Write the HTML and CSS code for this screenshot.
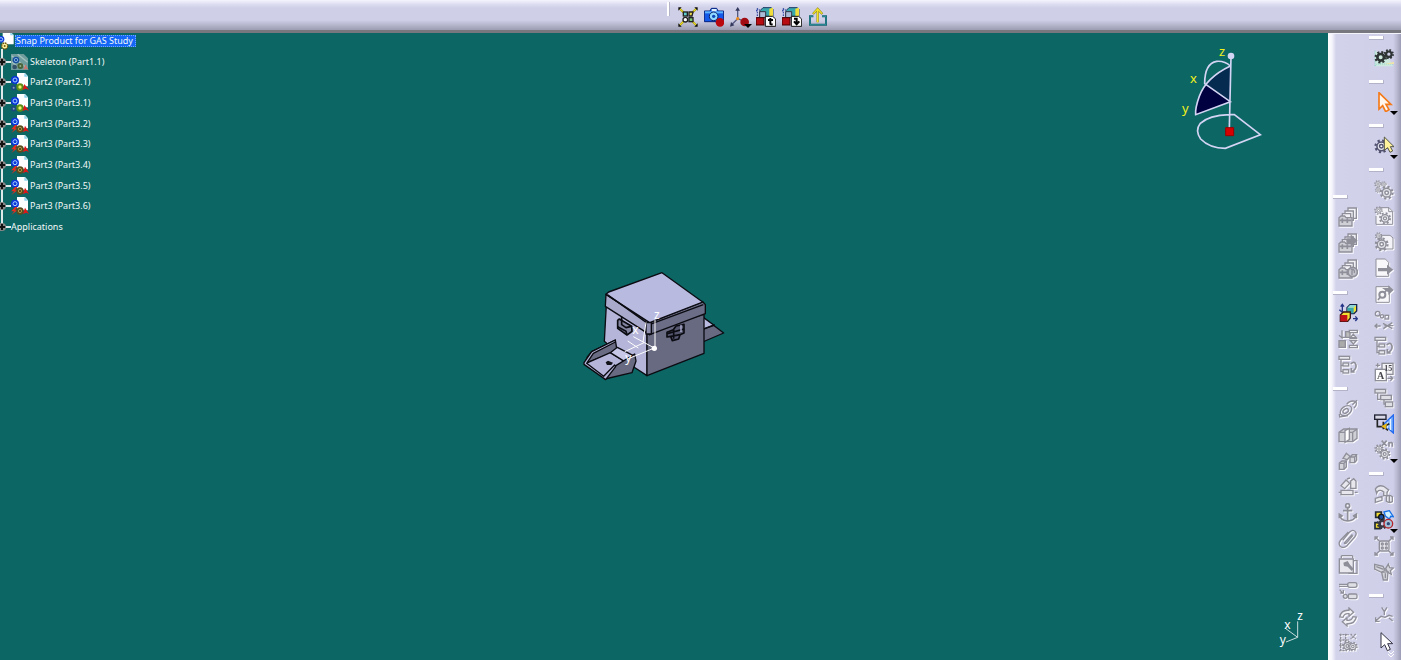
FILE: index.html
```html
<!DOCTYPE html>
<html lang="en">
<head>
<meta charset="utf-8">
<title>Snap Product for GAS Study</title>
<link rel="stylesheet" href="styles.css">
</head>
<body>
<svg class="sprite" aria-hidden="true">
  <symbol id="gear" viewBox="-9.6 -9.6 19.2 19.2"><circle r="7.5" fill="none" stroke="currentColor" stroke-width="4" stroke-dasharray="3 2.9"/><circle r="5" fill="none" stroke="currentColor" stroke-width="4"/></symbol>
  <symbol id="gear-line" viewBox="-10 -10 20 20"><circle r="8" fill="none" stroke="currentColor" stroke-width="3" stroke-dasharray="3 3.3"/><circle r="6" fill="#e4e4ea" stroke="currentColor" stroke-width="2"/><circle r="2.4" fill="#fff" stroke="currentColor" stroke-width="2"/></symbol>
  <symbol id="part" viewBox="0 0 54 54">
    <path d="M18 0H42L51 10V40H18Z" fill="#fff"/><path d="M40 0L51 11H40Z" fill="#8fd4ee"/>
    <circle cx="12" cy="21" r="12" fill="#0a35d8"/><circle cx="12" cy="21" r="6" fill="none" stroke="#a8d4ff" stroke-width="3"/>
    <circle cx="8" cy="44" r="8" fill="#1c4880"/><circle cx="8" cy="44" r="3" fill="#7f9ec0"/>
    <circle cx="27" cy="42" r="11" fill="#5d8c16"/><circle cx="27" cy="42" r="5" fill="#eef06a"/>
    <path d="M35 51L40 33L54 51L45 47Z" fill="#e01818"/>
  </symbol>
  <symbol id="part-red" viewBox="0 0 54 54">
    <path d="M18 0H42L51 10V40H18Z" fill="#fff"/><path d="M40 0L51 11H40Z" fill="#8fd4ee"/>
    <circle cx="12" cy="20" r="12" fill="#0a35d8"/><circle cx="12" cy="20" r="6" fill="none" stroke="#a8d4ff" stroke-width="3"/>
    <path d="M12 30L1 43H10L1 54L19 40H12L19 31Z" fill="#f02a1a"/>
    <circle cx="27" cy="42" r="11" fill="#5b4a1c"/><circle cx="27" cy="42" r="5" fill="none" stroke="#a8924a" stroke-width="3"/>
    <path d="M36 51L42 32L54 51L46 47Z" fill="#e01818"/>
  </symbol>
  <symbol id="skeleton" viewBox="0 0 54 54">
    <path d="M0 3H38L51 16V51H0Z" fill="#6f9c9c"/><path d="M2 8L46 44M2 26L26 46M20 4L50 28" stroke="#a5c1c1" stroke-width="4"/>
    <circle cx="15" cy="21" r="10" fill="#174e9d"/><circle cx="15" cy="21" r="5" fill="none" stroke="#79a9d8" stroke-width="3"/>
    <circle cx="11" cy="42" r="7" fill="#34516b"/><circle cx="28" cy="39" r="9" fill="#49653b"/><circle cx="28" cy="39" r="3" fill="#9ab08b"/>
    <path d="M37 51L43 34L53 51L46 47Z" fill="#c87870"/>
  </symbol>
  <symbol id="product" viewBox="0 0 42 54">
    <path d="M8 0H32L41 9V37H8Z" fill="#fff"/><path d="M31 0L41 10H31Z" fill="#8fd4ee"/>
    <circle cx="3" cy="22" r="10" fill="#0a35d8"/><circle cx="3" cy="22" r="5" fill="none" stroke="#a8d4ff" stroke-width="3"/>
    <circle cx="14" cy="42" r="9" fill="#fff2a0" stroke="#6f5a10" stroke-width="4" stroke-dasharray="5 2"/><circle cx="14" cy="42" r="3" fill="#6f5a10"/>
  </symbol>

  <symbol id="fit" viewBox="0 0 60 60">
    <path d="M5 5L22 21M55 5L38 21M5 55L22 38M55 55L38 38" stroke="#8a8018" stroke-width="6"/>
    <path d="M5 5L22 21M55 5L38 21M5 55L22 38M55 55L38 38" stroke="#e8d820" stroke-width="4"/>
    <path d="M1 1H11L1 11ZM59 1H49L59 11ZM1 59V49L11 59ZM59 59V49L49 59Z" fill="#111"/>
    <g fill="#fff" stroke="#222" stroke-width="4"><rect x="16" y="15" width="12" height="12" fill="#5fd0d0"/><path d="M33 15H45L42 27H33Z" fill="#eadb4d"/><circle cx="22" cy="38" r="7"/><rect x="33" y="32" width="12" height="12" fill="#7bc878"/></g>
  </symbol>
  <symbol id="camera" viewBox="0 0 60 60">
    <path d="M1 12H18L22 4H38L42 12H59V44H1Z" fill="#1358e8" stroke="#06217d" stroke-width="3"/><path d="M3 16H57" stroke="#5db6ff" stroke-width="6"/><rect x="23" y="6" width="15" height="7" fill="#dff0ff"/>
    <circle cx="29" cy="28" r="13" fill="#8fd8ff" stroke="#08226d" stroke-width="3"/><circle cx="29" cy="28" r="5" fill="#0c48b8"/><circle cx="48" cy="46" r="13" fill="#b9080e"/>
  </symbol>
  <symbol id="axes" viewBox="0 0 60 60">
    <path d="M23 4V35L4 54M23 35L40 42" fill="none" stroke="#555a80" stroke-width="4"/><path d="M23 0L30 11H16ZM0 59L3 45L13 55Z" fill="#33395e"/><circle cx="23" cy="35" r="5" fill="#e98d20"/><circle cx="44" cy="45" r="13" fill="#a20b12"/>
  </symbol>
  <symbol id="boxes" viewBox="0 0 60 60">
    <path d="M4 6V35M0 14L4 4L12 10M4 35L15 25" stroke="#233a9a" stroke-width="3" fill="none" stroke-dasharray="5 3"/>
    <path d="M12 11L21 2H46L51 7V28H12Z" fill="#38a8ad" stroke="#193b66" stroke-width="3"/><path d="M40 5L51 2V28H40Z" fill="#f1de3d"/><path d="M11 14H29V32H11Z" fill="#a9bcd8" stroke="#334" stroke-width="3"/><rect x="0" y="32" width="24" height="22" fill="#b60c12" stroke="#400" stroke-width="3"/>
    <path d="M28 28H50L59 36V58H28Z" fill="#fff" stroke="#111" stroke-width="3"/>
  </symbol>
  <symbol id="load" viewBox="0 0 60 60"><use href="#boxes"/><path d="M43 33V50Q43 53 50 52M36 39H51" fill="none" stroke="#000" stroke-width="6"/></symbol>
  <symbol id="unload" viewBox="0 0 60 60"><use href="#boxes"/><path d="M36 35H44V50M36 43L44 52L52 43" fill="none" stroke="#000" stroke-width="6"/></symbol>
  <symbol id="export" viewBox="0 0 60 60">
    <path d="M16 28H6V53H54V28H42" fill="none" stroke="#15616c" stroke-width="6"/><path d="M16 28H6V53H54V28H42" fill="none" stroke="#37a5b0" stroke-width="2"/>
    <path d="M29 8V46M15 21L29 6L43 21" fill="none" stroke="#938a14" stroke-width="7"/><path d="M29 8V46M16 20L29 6L42 20" fill="none" stroke="#f2e32a" stroke-width="4"/>
  </symbol>

  <symbol id="workbench" viewBox="0 0 60 60">
    <path d="M3 8V55H58L44 31Z" fill="#cce8df"/><path d="M3 8V55L8 48H57" fill="none" stroke="#69cdbb" stroke-width="2" stroke-dasharray="3 3"/><path d="M30 49L61 41V48Z" fill="#eee3aa"/>
    <g color="#2e3434"><use href="#gear" x="1" y="9" width="38" height="38"/><use href="#gear" x="29" y="3" width="31" height="31"/></g>
  </symbol>
  <symbol id="arrow" viewBox="0 0 60 60"><path d="M15 2V51L26 41L35 59L45 53L36 37H51Z" fill="#fff6ed" stroke="#f47a19" stroke-width="5"/></symbol>
  <symbol id="select" viewBox="0 0 60 60"><g color="#515170"><use href="#gear-line" x="0" y="9" width="44" height="44"/></g><path d="M31 3V43L41 35L48 49L56 45L49 32H60Z" fill="#fff29a" stroke="#55564a" stroke-width="3"/></symbol>
  <symbol id="cursor" viewBox="0 0 60 60"><path d="M21 2V48L32 38L40 56L49 52L41 35H56Z" fill="#fff" stroke="#333344" stroke-width="3"/></symbol>

  <symbol id="g-gears" viewBox="0 0 60 60"><use href="#gear-line" x="0" y="0" width="24" height="24"/><use href="#gear-line" x="20" y="3" width="19" height="19"/><use href="#gear-line" x="2" y="20" width="20" height="20"/><use href="#gear-line" x="16" y="16" width="44" height="44"/></symbol>
  <symbol id="g-gearpage" viewBox="0 0 60 60"><path d="M18 5H45L56 16V55H6V30" fill="#f4f4f8" stroke="currentColor" stroke-width="3"/><path d="M44 5V17H56" fill="none" stroke="currentColor" stroke-width="3"/><use href="#gear-line" x="0" y="0" width="27" height="27"/><use href="#gear-line" x="14" y="18" width="38" height="38"/></symbol>
  <symbol id="g-gearpage2" viewBox="0 0 60 60"><path d="M22 10H48L57 18V51H22Z" fill="#f4f4f8" stroke="currentColor" stroke-width="3"/><use href="#gear-line" x="2" y="0" width="24" height="24"/><use href="#gear-line" x="1" y="15" width="44" height="44"/></symbol>
  <symbol id="g-pagearrow" viewBox="0 0 60 60"><path d="M6 3H34L44 13V55H6Z" fill="#f8f8fa" stroke="currentColor" stroke-width="3"/><path d="M12 30H39V20L58 35L39 50V40H12Z" fill="currentColor"/></symbol>
  <symbol id="g-replace" viewBox="0 0 60 60"><path d="M6 8H46V55H6Z" fill="#f8f8fa" stroke="currentColor" stroke-width="3"/><path d="M24 12H43V4L59 18L43 33V25" fill="currentColor"/><circle cx="25" cy="32" r="9" fill="none" stroke="currentColor" stroke-width="6"/><path d="M12 48L18 40M32 25L38 18" stroke="currentColor" stroke-width="5"/></symbol>
  <symbol id="g-reorder" viewBox="0 0 60 60"><g fill="none" stroke="currentColor" stroke-width="4"><circle cx="11" cy="11" r="7"/><circle cx="24" cy="19" r="5"/><rect x="33" y="16" width="11" height="11"/><path d="M3 48H20M10 41L3 48L10 55M27 40L55 56M55 38L28 56M31 47H58"/></g></symbol>
  <symbol id="g-tree" viewBox="0 0 60 60"><g fill="#e9e9f0" stroke="currentColor" stroke-width="4"><path d="M9 14V50H18M9 31H18" fill="none"/><rect x="3" y="4" width="32" height="9"/><rect x="15" y="24" width="17" height="9"/><rect x="15" y="44" width="17" height="10"/><path d="M38 27Q50 16 54 30Q56 42 42 50M40 39V51H50" fill="none" stroke-width="5"/></g></symbol>
  <symbol id="g-treegraph" viewBox="0 0 60 60"><g fill="#dedee5" stroke="currentColor" stroke-width="4"><path d="M11 16V34H24M30 30V48H38" fill="none"/><rect x="3" y="4" width="32" height="11"/><rect x="20" y="22" width="32" height="13"/><rect x="34" y="42" width="22" height="14"/></g></symbol>
  <symbol id="manage" viewBox="0 0 60 60"><path d="M58 3L29 31L58 57Z" fill="#7eb6ff" stroke="#246bf0" stroke-width="4"/><path d="M49 15V48M41 25V43" stroke="#fff" stroke-width="3"/><rect x="2" y="3" width="34" height="13" fill="#d8d8e6" stroke="#222333" stroke-width="4"/><path d="M10 17V38H28M28 23V46M28 38L46 29M28 38L42 49" stroke="#252525" fill="none" stroke-width="5"/><path d="M22 37L39 28L36 46Z" fill="#ecba15"/></symbol>
  <symbol id="g-multi" viewBox="0 0 60 60"><use href="#gear-line" x="0" y="12" width="30" height="30"/><use href="#gear-line" x="14" y="24" width="36" height="36"/><path d="M23 2L38 18M38 2L23 18M45 20V6M45 10Q55 4 55 13V20" fill="none" stroke="currentColor" stroke-width="5"/></symbol>
  <symbol id="g-stack" viewBox="0 0 60 60"><g fill="#f2f2f6" stroke="currentColor" stroke-width="4"><path d="M30 3H55V34H30Z"/><path d="M21 12H46V40H21Z"/><path d="M13 20H38V44H13Z"/><path d="M3 32L9 27H20L24 32H42V57H3Z" fill="#cfcfd6"/></g><path d="M5 40H40M13 34V48M28 34V48" stroke="currentColor" stroke-width="5"/></symbol>
  <symbol id="g-stackarrow" viewBox="0 0 60 60"><use href="#g-stack"/><path d="M25 16H38V4L59 23L38 42V30H25Z" fill="currentColor"/></symbol>
  <symbol id="g-stackround" viewBox="0 0 60 60"><use href="#g-stack"/><circle cx="44" cy="39" r="14" fill="#c4c4cc" stroke="currentColor" stroke-width="5"/><path d="M38 31Q52 29 49 42M42 34V48" fill="none" stroke="currentColor" stroke-width="4"/></symbol>
  <symbol id="cubes" viewBox="0 0 60 60"><path d="M13 5V28L4 20M13 28H27M45 47H58M52 40L58 47L52 54M8 11L13 4L18 11" stroke="#243485" fill="none" stroke-width="4"/><path d="M27 14L36 5H56V24L48 32H27Z" fill="#f1df32" stroke="#16254e" stroke-width="4"/><path d="M28 14H47V31H28Z" fill="#38a8ad"/><path d="M28 14L36 6H55L47 14Z" fill="#8fd6d8"/><path d="M7 36L16 27H37V45L29 55H7Z" fill="#f1df32" stroke="#3c1515" stroke-width="4"/><path d="M7 36H28V55H7Z" fill="#bf1319"/></symbol>
  <symbol id="g-cubes" viewBox="0 0 60 60"><g fill="#f2f2f6" stroke="currentColor" stroke-width="4"><path d="M12 4V27L3 19M12 25H30V9M2 48H22" fill="none"/><path d="M23 8H36V25H23Z" fill="#bbb"/><path d="M3 35H22V55H3Z" fill="#aaa"/><path d="M34 4H58V11H34ZM37 26L46 16L55 26ZM34 29H58M37 35H55L46 45ZM34 49H58V56H34Z"/></g></symbol>
  <symbol id="g-coincide" viewBox="0 0 60 60"><g fill="none" stroke="currentColor" stroke-width="4"><ellipse cx="24" cy="35" rx="19" ry="13" transform="rotate(-35 24 35)"/><ellipse cx="23" cy="36" rx="9" ry="6" transform="rotate(-35 23 36)"/><path d="M26 16Q35 3 53 7Q59 17 48 27M43 17L57 4M4 45L5 54L30 50"/></g></symbol>
  <symbol id="g-contact" viewBox="0 0 60 60"><g fill="#cfcfd6" stroke="currentColor" stroke-width="4"><path d="M3 22L17 12H57V40L44 50H3Z"/><path d="M3 22H44V50M44 22L57 12" fill="none"/><path d="M21 17L34 10V44L21 52Z" fill="#fff"/></g></symbol>
  <symbol id="g-offset" viewBox="0 0 60 60"><g fill="#d5d5dc" stroke="currentColor" stroke-width="4"><path d="M4 36L12 30H25V48L18 55H4Z"/><path d="M4 37H18V55M18 37L25 30M36 18L43 11H56V28L50 35H36ZM36 18H50V35M50 18L56 12"/><path d="M15 22L25 7L36 16L28 26Z"/></g></symbol>
  <symbol id="g-angle" viewBox="0 0 60 60"><g fill="#e7e7ed" stroke="currentColor" stroke-width="4"><path d="M9 26L24 9L35 19L20 35Z"/><path d="M9 40H45V53H9Z"/><path d="M38 12L47 5L54 12V34H38Z"/><path d="M2 46H9M50 46H59M27 6L36 3" fill="none"/></g></symbol>
  <symbol id="g-anchor" viewBox="0 0 60 60"><g fill="none" stroke="currentColor" stroke-width="5"><circle cx="29" cy="8" r="6"/><path d="M29 14V53M15 23H43M5 37Q8 53 29 54Q50 53 54 37M4 46V34L14 40M55 46V34L45 40"/></g></symbol>
  <symbol id="g-clip" viewBox="0 0 60 60"><path d="M14 34L36 8Q45 0 52 8Q58 14 50 24L26 51Q14 60 6 51Q0 43 8 33L31 9M18 43L43 16M18 43Q22 46 27 40L45 19" fill="none" stroke="currentColor" stroke-width="4"/></symbol>
  <symbol id="g-quick" viewBox="0 0 60 60"><g fill="#e7e7ed" stroke="currentColor" stroke-width="4"><path d="M10 2H44M10 2V10M44 2V10" fill="none"/><path d="M4 12H46V54H4Z"/><path d="M48 17H57V55H31" fill="none"/><path d="M16 23L29 18L36 29L47 41L41 48L29 35L18 33Z" fill="currentColor" stroke="none"/></g></symbol>
  <symbol id="g-flex" viewBox="0 0 60 60"><g fill="#dedee5" stroke="currentColor" stroke-width="4"><path d="M3 10H31M3 16H31"/><rect x="29" y="5" width="28" height="14" rx="6"/><path d="M5 26L15 38M7 36H16V27"/><circle cx="22" cy="46" r="6"/><rect x="31" y="39" width="26" height="14" rx="4"/></g></symbol>
  <symbol id="g-cycle" viewBox="0 0 60 60"><g fill="#f2f2f6" stroke="currentColor" stroke-width="4"><path d="M5 30Q10 8 33 10V3L47 16L33 28V20Q19 18 15 31ZM55 30Q50 52 27 50V57L13 44L27 32V40Q41 42 45 29Z"/></g></symbol>
  <symbol id="g-reuse" viewBox="0 0 60 60"><path d="M4 5H33M4 21H33M4 37H20M8 2V54M23 2V40M4 53H20M38 3L53 18M53 3L38 18" stroke="currentColor" stroke-width="4" stroke-dasharray="7 2"/><use href="#gear-line" x="11" y="22" width="34" height="34"/><use href="#gear-line" x="29" y="25" width="31" height="31"/></symbol>
  <symbol id="g-bolt" viewBox="0 0 60 60"><g fill="#e7e7ed" stroke="currentColor" stroke-width="4"><path d="M4 15Q13 1 29 7L44 18L36 29L23 20Q12 16 8 28Z"/><path d="M29 25V35H39V24M4 43L24 37V49L4 55ZM37 37Q46 31 55 38V53Q46 59 37 52ZM46 35V56"/></g></symbol>
  <symbol id="clash" viewBox="0 0 60 60"><path d="M30 6L46 2L58 20L50 19L46 27L34 18Z" fill="#d1f2ff" stroke="#1a72e7" stroke-width="4"/><path d="M5 6H22V22H5ZM3 38H18V56H3Z" fill="#f2db31" stroke="#202a36" stroke-width="5"/><circle cx="22" cy="21" r="8" fill="#174d9f" stroke="#111" stroke-width="4"/><g color="#353842"><use href="#gear" x="8" y="24" width="34" height="34"/></g><circle cx="43" cy="41" r="13" fill="#a6c2d7" stroke="#b3272a" stroke-width="4"/><circle cx="43" cy="41" r="5" fill="#2c4a78"/></symbol>
  <symbol id="g-explode" viewBox="0 0 60 60"><g fill="#e7e7ed" stroke="currentColor" stroke-width="4"><path d="M4 4L19 18M56 4L42 18M4 56L19 43M56 56L42 43M3 12V3H12M48 3H57V12M3 48V57H12M48 57H57V48" fill="none"/><rect x="16" y="15" width="29" height="30" rx="5"/><circle cx="25" cy="24" r="3"/><circle cx="37" cy="24" r="3"/><circle cx="25" cy="36" r="3"/><circle cx="37" cy="36" r="3"/></g></symbol>
  <symbol id="g-spray" viewBox="0 0 60 60"><g fill="#d5d5dd" stroke="currentColor" stroke-width="4"><path d="M2 7L27 13L34 25L22 31L2 21Z"/><path d="M35 20L43 6L47 17L58 18L49 26L52 37L41 31Z"/><path d="M23 31L42 29L40 54H28Z"/><path d="M7 14L29 22M34 34V49"/></g></symbol>
  <symbol id="g-axis" viewBox="0 0 60 60"><path d="M23 4L31 17L39 4M31 17V27M5 45L21 31L33 34L45 28L56 31M5 34V46H17M45 36L56 45" fill="none" stroke="currentColor" stroke-width="4"/></symbol>
</svg>

<header class="topbar">
  <nav class="tools" aria-label="View">
    <span class="grip"></span>
    <button aria-label="Fit all in"><svg><use href="#fit"/></svg></button>
    <button aria-label="Capture"><svg><use href="#camera"/></svg></button>
    <button class="more" aria-label="Axis system"><svg><use href="#axes"/></svg></button>
    <button aria-label="Load"><svg><use href="#load"/></svg></button>
    <button aria-label="Unload"><svg><use href="#unload"/></svg></button>
    <button aria-label="Export"><svg><use href="#export"/></svg></button>
  </nav>
</header>

<div class="workspace">
  <main class="viewport">
    <ul class="tree">
      <li class="root"><svg class="root-icon"><use href="#product"/></svg><span class="selected">Snap Product for GAS Study</span></li>
      <li><button class="expand" aria-label="Expand"></button><svg><use href="#skeleton"/></svg><span>Skeleton (Part1.1)</span></li>
      <li><button class="expand" aria-label="Expand"></button><svg><use href="#part"/></svg><span>Part2 (Part2.1)</span></li>
      <li><button class="expand" aria-label="Expand"></button><svg><use href="#part"/></svg><span>Part3 (Part3.1)</span></li>
      <li><button class="expand" aria-label="Expand"></button><svg><use href="#part-red"/></svg><span>Part3 (Part3.2)</span></li>
      <li><button class="expand" aria-label="Expand"></button><svg><use href="#part-red"/></svg><span>Part3 (Part3.3)</span></li>
      <li><button class="expand" aria-label="Expand"></button><svg><use href="#part-red"/></svg><span>Part3 (Part3.4)</span></li>
      <li><button class="expand" aria-label="Expand"></button><svg><use href="#part-red"/></svg><span>Part3 (Part3.5)</span></li>
      <li><button class="expand" aria-label="Expand"></button><svg><use href="#part-red"/></svg><span>Part3 (Part3.6)</span></li>
      <li><button class="expand" aria-label="Expand"></button><span>Applications</span></li>
    </ul>

    <svg class="model" viewBox="0 0 510 375" role="img" aria-label="Snap box assembly">
      <g stroke="#0b0b12" stroke-width="4" stroke-linejoin="round">
        <path d="M398 165L461 213L398 240Z" fill="#686a82"/><path d="M398 165L432 190L398 202Z" fill="#b9badf"/><path d="M398 202L434 188"/>
        <path d="M109 128L231 212V341L196 318L103 238Z" fill="#b4b5d8"/>
        <path d="M231 212L402 156V274L231 341Z" fill="#686a82"/>
        <path d="M108 97L239 182V218L106 133Z" fill="#a9aacb"/>
        <path d="M239 182L399 120L406 128V155L239 218Z" fill="#6c6e87"/>
        <path d="M231 184V212L239 218M108 97L119 91L239 174L398 118" fill="none"/>
        <path d="M116 90L276 32L398 120L239 182L108 97Z" fill="#b9badf"/>
        <path d="M112 98L238 188L400 128" fill="none"/>
        <path d="M228 182H244V216H228Z" fill="#8d8eae"/>
        <g stroke-width="5">
          <path d="M143 175L148 171L185 193L186 208L171 219L143 199Z" fill="#8284a0"/><path d="M155 164V188L168 197L184 193M143 194L168 208L171 219" fill="none"/>
          <path d="M291 211L310 203L318 192L342 187V213L330 218L326 231L307 236L302 223L291 225Z" fill="#55576e"/><path d="M292 215L342 201M311 204V230M303 223L330 218" fill="none"/>
        </g>
        <path d="M333 188V210" stroke="#b4b5d8"/>
        <path d="M65 269L136 234L140 259L120 275L44 305L52 285Z" fill="#6a6c84"/>
        <path d="M48 304L121 272L166 299L105 349Z" fill="#b4b5d8"/>
        <path d="M121 272L142 256L190 281L164 299Z" fill="#c7c8e8"/>
        <path d="M105 351L134 313L194 276L198 297L186 332Z" fill="#686a82"/>
        <path d="M42 302L65 269L136 234L136 240L70 274L50 304L101 343L134 309L137 314L107 353L42 307Z" fill="#b4b5d8"/>
      </g>
      <path d="M107 301L114 296L129 302L124 309L111 309Z" fill="#111118"/>
      <g stroke="#fff" stroke-width="3" fill="none"><path d="M255 258V174M253 258L190 224M253 258L173 291M222 242L164 269M219 240L228 181M173 237L205 258"/></g>
      <circle cx="253" cy="259" r="8" fill="#fff"/>
      <g class="model-label"><text x="252" y="170">z</text><text x="187" y="216">x</text><text x="166" y="300">y</text></g>
    </svg>

    <svg class="compass" viewBox="0 0 330 360" role="img" aria-label="Compass">
      <path d="M181 78V185L107 134Q136 100 181 78Z" fill="#062b50"/><path d="M107 134L181 185L77 224Q75 180 107 134Z" fill="#000040"/>
      <g fill="none" stroke="#d4d4f4" stroke-width="5"><path d="M183 50L178 264M181 78Q108 113 88 169Q75 205 77 224L181 185L104 131Q104 70 140 64Q164 62 181 78M178 224Q117 226 91 250Q74 272 92 297Q119 325 166 325L271 284L193 224Z"/></g>
      <circle cx="183" cy="48" r="10" fill="#d4d4f4"/><path d="M167 263H191V287H167Z" fill="#d70000" stroke="#9c0000" stroke-width="3"/>
      <g class="compass-label"><text x="147" y="47">z</text><text x="60" y="129">x</text><text x="36" y="220">y</text></g>
    </svg>

    <svg class="triad" viewBox="0 0 120 150" role="img" aria-label="Axes">
      <path d="M77 34V82L40 55M77 82L42 96" fill="none" stroke="#c7dddd" stroke-width="3"/>
      <g class="triad-label"><text x="76" y="29">z</text><text x="37" y="56">x</text><text x="23" y="102">y</text></g>
    </svg>
  </main>

  <aside class="sidebar">
    <div class="column constraints">
      <section class="group">
        <span class="handle"></span>
        <button class="off" aria-label="Open stack"><svg><use href="#g-stack"/></svg></button>
        <button class="off" aria-label="Move stack"><svg><use href="#g-stackarrow"/></svg></button>
        <button class="off" aria-label="Refresh stack"><svg><use href="#g-stackround"/></svg></button>
      </section>
      <section class="group">
        <span class="handle"></span>
        <button aria-label="Product axes"><svg><use href="#cubes"/></svg></button>
        <button class="off" aria-label="Publish"><svg><use href="#g-cubes"/></svg></button>
        <button class="off" aria-label="Reorder tree"><svg><use href="#g-tree"/></svg></button>
      </section>
      <section class="group">
        <span class="handle"></span>
        <button class="off" aria-label="Coincidence"><svg><use href="#g-coincide"/></svg></button>
        <button class="off" aria-label="Contact"><svg><use href="#g-contact"/></svg></button>
        <button class="off" aria-label="Offset"><svg><use href="#g-offset"/></svg></button>
        <button class="off" aria-label="Angle"><svg><use href="#g-angle"/></svg></button>
        <button class="off" aria-label="Fix"><svg><use href="#g-anchor"/></svg></button>
        <button class="off" aria-label="Fix together"><svg><use href="#g-clip"/></svg></button>
        <button class="off" aria-label="Quick constraint"><svg><use href="#g-quick"/></svg></button>
        <button class="off" aria-label="Flexible assembly"><svg><use href="#g-flex"/></svg></button>
        <button class="off" aria-label="Change constraint"><svg><use href="#g-cycle"/></svg></button>
        <button class="off" aria-label="Reuse pattern"><svg><use href="#g-reuse"/></svg></button>
      </section>
    </div>
    <div class="column">
      <section class="group"><span class="handle"></span><button aria-label="Assembly design"><svg><use href="#workbench"/></svg></button></section>
      <section class="group"><span class="handle"></span><button class="more" aria-label="Select"><svg><use href="#arrow"/></svg></button></section>
      <section class="group"><span class="handle"></span><button class="more" aria-label="Product selection"><svg><use href="#select"/></svg></button></section>
      <section class="group">
        <span class="handle"></span>
        <button class="off" aria-label="Component"><svg><use href="#g-gears"/></svg></button>
        <button class="off" aria-label="Product"><svg><use href="#g-gearpage"/></svg></button>
        <button class="off" aria-label="Part"><svg><use href="#g-gearpage2"/></svg></button>
        <button class="off" aria-label="Existing component"><svg><use href="#g-pagearrow"/></svg></button>
        <button class="off" aria-label="Replace component"><svg><use href="#g-replace"/></svg></button>
        <button class="off" aria-label="Reconnect"><svg><use href="#g-reorder"/></svg></button>
        <button class="off" aria-label="Graph tree"><svg><use href="#g-tree"/></svg></button>
        <button class="off" aria-label="Generate numbering">
          <svg viewBox="0 0 60 60"><rect x="24" y="4" width="33" height="33" fill="#f4f4f7" stroke="currentColor" stroke-width="4"/><rect x="4" y="22" width="33" height="34" fill="#fff" stroke="currentColor" stroke-width="4"/><path d="M5 10H18M11 4V16M40 49H56M49 42L56 49L49 56" stroke="currentColor" stroke-width="4" fill="none"/><text class="number-label" x="20" y="50">A</text><text class="number-label small" x="43" y="26">15</text></svg>
        </button>
        <button class="off" aria-label="Selective load"><svg><use href="#g-treegraph"/></svg></button>
        <button aria-label="Manage representations"><svg><use href="#manage"/></svg></button>
        <button class="off more" aria-label="Multi instantiation"><svg><use href="#g-multi"/></svg></button>
      </section>
      <section class="group">
        <span class="handle"></span>
        <button class="off" aria-label="Manipulate"><svg><use href="#g-bolt"/></svg></button>
        <button class="more" aria-label="Snap"><svg><use href="#clash"/></svg></button>
        <button class="off" aria-label="Explode"><svg><use href="#g-explode"/></svg></button>
        <button class="off" aria-label="Stop on clash"><svg><use href="#g-spray"/></svg></button>
      </section>
      <section class="group">
        <span class="handle"></span>
        <button class="off" aria-label="Annotation"><svg><use href="#g-axis"/></svg></button>
        <button aria-label="Pointer"><svg><use href="#cursor"/></svg></button>
      </section>
    </div>
    <svg class="overflow" viewBox="0 0 8 8"><path d="M1 1L4 4L7 1M1 4L4 7L7 4"/></svg>
  </aside>
</div>
</body>
</html>
```

FILE: styles.css
```css
* { box-sizing: border-box; }
body {
  margin: 0;
  height: 100vh;
  overflow: hidden;
  display: flex;
  flex-direction: column;
  background: #0c6664;
  font-family: "Noto Sans", "Open Sans", sans-serif;
}
button { border: 0; padding: 0; background: none; color: inherit; font: inherit; }
svg { display: block; flex: none; }
.sprite { position: absolute; width: 0; height: 0; }

.topbar {
  flex: none;
  height: 33px;
  border-bottom: 3px solid #77777f;
  background: linear-gradient(#f4f4fd 0, #dedef2 4px, #cfcfe8 8px, #cfcfe8 20px, #b5b5cc 25px, #9c9cb2 100%);
}
.tools { display: flex; justify-content: center; padding-left: 96px; }
.tools button { position: relative; width: 26px; height: 33px; display: grid; place-items: center; }
.tools svg { width: 20px; height: 20px; }
.grip { width: 3px; height: 14px; margin: 2px 5px 0 0; background: #fff; border-right: 1px solid #b4b4c8; }

.workspace { flex: 1; min-height: 0; display: flex; }
.viewport { position: relative; flex: 1; background: #0c6664; overflow: hidden; }

.tree {
  position: relative;
  width: max-content;
  height: 202px;
  margin: 0;
  padding: 0;
  list-style: none;
  display: flex;
  flex-direction: column;
  justify-content: space-between;
  color: #f2f8f8;
  font-size: 9px;
  line-height: 12px;
}
.tree::before { content: ""; position: absolute; left: 1px; top: 16px; bottom: 8px; width: 2px; background: #dfe9e9; }
.tree li { position: relative; display: flex; align-items: center; height: 16px; }
.tree li svg { width: 18px; height: 18px; margin-right: 1px; }
.tree li .root-icon { width: 14px; }
.selected { padding: 0 3px 0 1px; background: #1467f5; outline: 1px dotted #73a7ff; outline-offset: -1px; }
.expand {
  position: relative;
  width: 6px;
  height: 8px;
  margin-right: 5px;
  border-radius: 0 4px 4px 0;
  background: linear-gradient(#111, #111) 0 3px / 5px 2px no-repeat, linear-gradient(#111, #111) 1px 1px / 2px 6px no-repeat, #858585;
}
.expand::after { content: ""; position: absolute; left: 6px; top: 3px; width: 5px; height: 2px; background: #dfe9e9; }

.model { position: absolute; left: calc(50% - 94px); top: 229px; width: 170px; height: 125px; }
.compass { position: absolute; right: 48px; top: 7px; width: 110px; height: 120px; }
.triad { position: absolute; right: 16px; bottom: 0; width: 40px; height: 50px; overflow: visible; }
.model-label { fill: #fff; font-size: 36px; }
.compass-label { fill: #f0f01c; font-size: 39px; }
.triad-label { fill: #fff; font-size: 36px; }
.number-label { fill: #45454d; font: 700 30px "Liberation Serif", serif; text-anchor: middle; }
.number-label.small { font-size: 24px; }

.sidebar {
  position: relative;
  flex: none;
  width: 73px;
  display: flex;
  padding-left: 5px;
  border-top: 1px solid #f4f4fb;
  background: linear-gradient(90deg, #fff 0, #f4f4fc 4px, #d2d2ea 8px, #cfcfe9 65px, #b9b9d2 69px, #9c9cb6 100%);
}
.column { width: 36px; flex: none; padding-top: 2px; }
.constraints { padding-top: 161px; }
.group { display: flex; flex-direction: column; margin-bottom: 9px; }
.handle { width: 15px; height: 4px; margin-bottom: 5px; background: #fff; border: solid #b2b2c8; border-width: 0 1px 1px 0; }
.group button { position: relative; width: 30px; height: 26px; display: grid; place-items: center; }
.group button svg { width: 20px; height: 20px; }
.group .off { color: #8f8f9a; }
.off svg { filter: drop-shadow(1px 1px 0 #fafaff); }
.more::after { content: ""; position: absolute; right: 1px; bottom: 5px; border: solid transparent; border-width: 4px 4px 0; border-top-color: #000; }
.group .more::after { bottom: 0; }
.overflow { position: absolute; right: 6px; bottom: 2px; width: 8px; height: 8px; fill: none; stroke: #fff; stroke-width: 1; }
```
